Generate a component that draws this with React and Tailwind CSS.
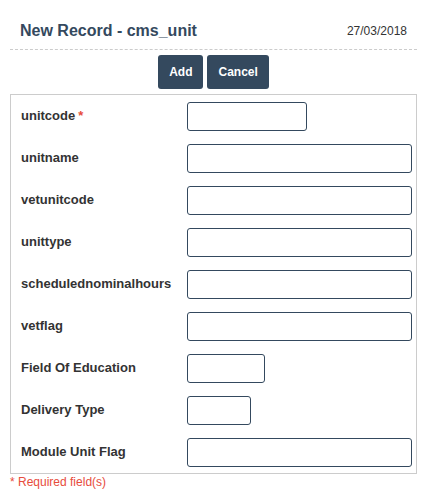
import React from "react";

// Campos do formulário de cms_unit; `w` é a largura do input em px
const FIELDS = [
  { name: "unitcode", required: true, w: "w-[120px]" },
  { name: "unitname", w: "w-[225px]" },
  { name: "vetunitcode", w: "w-[225px]" },
  { name: "unittype", w: "w-[225px]" },
  { name: "schedulednominalhours", w: "w-[225px]" },
  { name: "vetflag", w: "w-[225px]" },
  { name: "Field Of Education", w: "w-[78px]" },
  { name: "Delivery Type", w: "w-[64px]" },
  { name: "Module Unit Flag", w: "w-[225px]" },
];

export default function App() {
  return (
    <div className="w-[427px] min-h-[499px] bg-white font-['Liberation_Sans',Arial,sans-serif]">
      {/* Header */}
      <div className="mx-[10px] flex items-center justify-between border-b border-dashed border-[#ccc] px-[10px] pt-[21px] pb-[8px]">
        <h1 className="text-[16px] leading-[20px] font-bold text-[#34495e]">New Record - cms_unit</h1>
        <span className="text-[12px] leading-[20px] text-[#333]">27/03/2018</span>
      </div>

      {/* Actions */}
      <div className="mt-[5px] flex justify-center gap-[4px]">
        <button className="h-[34px] rounded-[3px] bg-[#34495e] px-[11px] text-[12px] font-bold text-white">Add</button>
        <button className="h-[34px] rounded-[3px] bg-[#34495e] px-[11px] text-[12px] font-bold text-white">Cancel</button>
      </div>

      {/* Form */}
      <div className="mx-[10px] mt-[5px] border border-[#ccc] pl-[10px]">
        {FIELDS.map((f) => (
          <div key={f.name} className="flex h-[42px] items-center">
            <label className="w-[166px] text-[13px] font-bold text-[#333]">
              {f.name}
              {f.required && <span className="ml-[3px] text-[#e74c3c]">*</span>}
            </label>
            <input
              type="text"
              className={`${f.w} h-[29px] rounded-[3px] border border-[#34495e] bg-white px-2 text-[13px] outline-none`}
            />
          </div>
        ))}
      </div>
      <p className="mx-[10px] text-[12px] leading-[16px] text-[#e74c3c]">* Required field(s)</p>
    </div>
  );
}
